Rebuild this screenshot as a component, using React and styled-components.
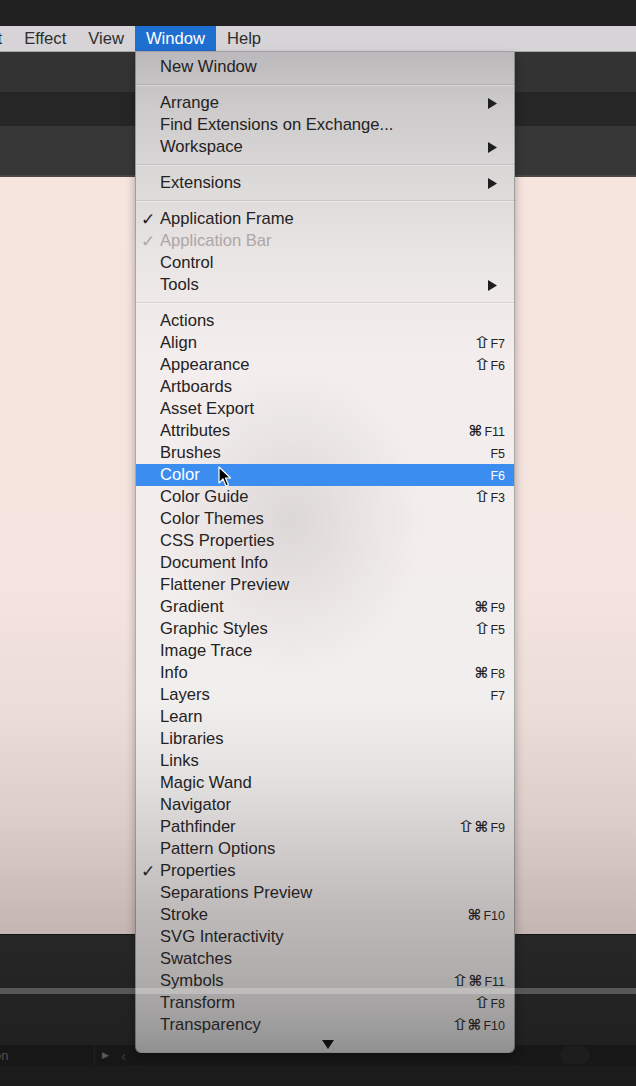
import React from 'react'
import styled, { createGlobalStyle } from 'styled-components'

const GlobalStyle = createGlobalStyle`
    html, body {
        margin: 0;
        padding: 0;
        background: #1a1a1a;
    }
    * { box-sizing: border-box; }
`;

const menuBarItems = ['Select', 'Effect', 'View', 'Window', 'Help'];

const items = [
    { label: 'New Window' },
    'sep',
    { label: 'Arrange', sub: true },
    { label: 'Find Extensions on Exchange...' },
    { label: 'Workspace', sub: true },
    'sep',
    { label: 'Extensions', sub: true },
    'sep',
    { label: 'Application Frame', check: true },
    { label: 'Application Bar', check: true, disabled: true },
    { label: 'Control' },
    { label: 'Tools', sub: true },
    'sep',
    { label: 'Actions' },
    { label: 'Align', keys: '⇧F7' },
    { label: 'Appearance', keys: '⇧F6' },
    { label: 'Artboards' },
    { label: 'Asset Export' },
    { label: 'Attributes', keys: '⌘F11' },
    { label: 'Brushes', keys: 'F5' },
    { label: 'Color', keys: 'F6', active: true },
    { label: 'Color Guide', keys: '⇧F3' },
    { label: 'Color Themes' },
    { label: 'CSS Properties' },
    { label: 'Document Info' },
    { label: 'Flattener Preview' },
    { label: 'Gradient', keys: '⌘F9' },
    { label: 'Graphic Styles', keys: '⇧F5' },
    { label: 'Image Trace' },
    { label: 'Info', keys: '⌘F8' },
    { label: 'Layers', keys: 'F7' },
    { label: 'Learn' },
    { label: 'Libraries' },
    { label: 'Links' },
    { label: 'Magic Wand' },
    { label: 'Navigator' },
    { label: 'Pathfinder', keys: '⇧⌘F9' },
    { label: 'Pattern Options' },
    { label: 'Properties', check: true },
    { label: 'Separations Preview' },
    { label: 'Stroke', keys: '⌘F10' },
    { label: 'SVG Interactivity' },
    { label: 'Swatches' },
    { label: 'Symbols', keys: '⇧⌘F11' },
    { label: 'Transform', keys: '⇧F8' },
    { label: 'Transparency', keys: '⇧⌘F10' },
];

function Shortcut({ keys }) {
    const symbols = keys.match(/[⇧⌘]/g) || [];
    const fkey = keys.replace(/[⇧⌘]/g, '');
    return (
        <Keys>
            {symbols.map((s, i) =>
                s === '⇧' ? <Shift key={i}>{s}</Shift> : <Cmd key={i}>{s}</Cmd>
            )}
            <FKey>{fkey}</FKey>
        </Keys>
    );
}

function MenuRow({ item }) {
    return (
        <Row $active={item.active} $disabled={item.disabled}>
            {item.check && <Check>✓</Check>}
            <Label>{item.label}</Label>
            {item.keys && <Shortcut keys={item.keys} />}
            {item.sub && (
                <SubArrow width="9" height="11" viewBox="0 0 9 11">
                    <polygon points="0,0 9,5.5 0,11" fill="#1e1e1e" />
                </SubArrow>
            )}
        </Row>
    );
}

function App() {
    return (
        <Page>
            <GlobalStyle />
            <TopBar />
            <MenuBar>
                {menuBarItems.map((m, i) => (
                    <BarItem key={m} $first={i === 0} $open={m === 'Window'}>{m}</BarItem>
                ))}
            </MenuBar>
            <ControlPanel />
            <TabStrip />
            <OptionsBar />
            <Canvas />
            <BottomArea>
                <StatusBar>
                    <StatusText>on</StatusText>
                    <StatusDivider />
                    <StatusPlay>▶</StatusPlay>
                    <StatusPrev>‹</StatusPrev>
                    <StatusPill />
                </StatusBar>
                <Footer />
            </BottomArea>

            <Dropdown>
                {items.map((item, i) =>
                    item === 'sep' ? <Separator key={i} /> : <MenuRow key={i} item={item} />
                )}
                <ScrollRow>
                    <svg width="12" height="9" viewBox="0 0 12 9">
                        <polygon points="0,0 12,0 6,9" fill="#111" />
                    </svg>
                </ScrollRow>
            </Dropdown>

            <ProgressStripe />

            <Cursor width="14" height="22" viewBox="0 0 14 22">
                <path d="M1 1 L1 17 L5 13 L8 20 L10.5 19 L7.5 12 L12.5 12 Z" fill="#000" stroke="#fff" strokeWidth="1.2" strokeLinejoin="round" />
            </Cursor>
        </Page>
    );
}

const Page = styled.div`
    position: relative;
    width: 636px;
    height: 1086px;
    overflow: hidden;
    display: flex;
    flex-direction: column;
    background: #1a1a1a;
    font-family: "Liberation Sans", Arial, sans-serif;
`;

const TopBar = styled.div`
    height: 26px;
    background: #212121;
    flex-shrink: 0;
`;

const MenuBar = styled.div`
    height: 26px;
    flex-shrink: 0;
    display: flex;
    align-items: stretch;
    background: #d6d4d6;
    border-bottom: 1px solid #a9a7a9;
`;

const BarItem = styled.div`
    display: flex;
    align-items: center;
    padding: 0 11px;
    margin-left: ${p => (p.$first ? '-55px' : '0')};
    font-size: 16.6px;
    color: ${p => (p.$open ? '#fff' : '#2e2e2e')};
    background: ${p => (p.$open ? '#1f6fd1' : 'transparent')};
`;

const ControlPanel = styled.div`
    height: 40px;
    flex-shrink: 0;
    background: #333333;
`;

const TabStrip = styled.div`
    height: 34px;
    flex-shrink: 0;
    background: #262626;
`;

const OptionsBar = styled.div`
    height: 51px;
    flex-shrink: 0;
    background: #373737;
    border-bottom: 2px solid #4b4645;
`;

const Canvas = styled.div`
    height: 758px;
    flex-shrink: 0;
    background: linear-gradient(to bottom, #f6e4de 0%, #f4e3de 55%, #ecddd8 70%, #dccdc9 85%, #c5b5b2 100%);
    border-bottom: 1px solid #161616;
`;

const BottomArea = styled.div`
    flex: 1;
    display: flex;
    flex-direction: column;
    justify-content: flex-end;
    background: linear-gradient(to bottom, #272727, #1e1e1e);
`;

const StatusBar = styled.div`
    height: 20px;
    display: flex;
    align-items: center;
    background: #171717;
    color: #4e4e4e;
    font-size: 13px;
`;

const StatusText = styled.span`
    width: 100px;
    margin-left: -6px;
`;

const StatusDivider = styled.span`
    width: 1px;
    height: 20px;
    background: #202020;
`;

const StatusPlay = styled.span`
    font-family: "DejaVu Sans", sans-serif;
    font-size: 9px;
    margin-left: 7px;
    color: #5a5a5a;
`;

const StatusPrev = styled.span`
    margin-left: 12px;
    font-size: 15px;
    color: #3c3c3c;
`;

const StatusPill = styled.span`
    width: 30px;
    height: 18px;
    border-radius: 9px;
    background: #1d1d1d;
    margin-left: auto;
    margin-right: 46px;
`;

const Footer = styled.div`
    height: 21px;
    background: #1b1b1b;
`;

const Dropdown = styled.div`
    position: absolute;
    top: 52px;
    left: 135px;
    width: 380px;
    height: 1001px;
    padding-top: 4px;
    display: flex;
    flex-direction: column;
    border-radius: 0 0 6px 6px;
    border: 1px solid rgba(0, 0, 0, 0.28);
    border-top: none;
    box-shadow: 0 4px 10px rgba(0, 0, 0, 0.3);
    background:
        radial-gradient(ellipse 130px 150px at 155px 470px, rgba(60, 55, 55, 0.12), rgba(60, 55, 55, 0) 100%),
        linear-gradient(to bottom,
            #bbb9bb 0px,
            #cbc9c9 50px,
            #dcd9d9 130px,
            #ebe6e6 210px,
            #f3eded 300px,
            #f3eeee 560px,
            #f1eeee 650px,
            #e5e2e2 720px,
            #d2cece 790px,
            #bebaba 860px,
            #aeabab 930px,
            #9c9b9b 980px,
            #8f8f8f 1001px);
`;

const Row = styled.div`
    position: relative;
    height: 22px;
    flex-shrink: 0;
    display: flex;
    align-items: center;
    padding: 0 9px 0 24px;
    font-size: 16.6px;
    line-height: 22px;
    color: ${p => (p.$active ? '#fff' : p.$disabled ? '#aca7a7' : '#242222')};
    background: ${p => (p.$active ? '#3b8df0' : 'transparent')};
`;

const Label = styled.span`
    flex: 1;
    white-space: nowrap;
`;

const Check = styled.span`
    position: absolute;
    left: 5px;
    top: 0;
    font-family: "DejaVu Sans", sans-serif;
    font-size: 17px;
    font-weight: bold;
`;

const Keys = styled.span`
    display: flex;
    align-items: center;
`;

const Shift = styled.span`
    display: inline-block;
    width: 13px;
    margin-right: 2px;
    text-align: center;
    font-family: "DejaVu Sans", sans-serif;
    font-size: 16px;
    line-height: 22px;
    transform: scaleX(1.5);
`;

const Cmd = styled.span`
    font-family: "DejaVu Sans", sans-serif;
    font-size: 15px;
    font-weight: bold;
    line-height: 22px;
    margin-right: 2px;
`;

const FKey = styled.span`
    font-size: 12.5px;
    line-height: 22px;
    margin-top: 1px;
`;

const SubArrow = styled.svg`
    margin-right: 8px;
`;

const Separator = styled.div`
    height: 14px;
    flex-shrink: 0;
    display: flex;
    align-items: center;
    &::after {
        content: '';
        flex: 1;
        height: 2px;
        background: linear-gradient(to bottom, rgba(0, 0, 0, 0.1) 50%, rgba(255, 255, 255, 0.35) 50%);
    }
`;

const ScrollRow = styled.div`
    height: 18px;
    display: flex;
    align-items: center;
    justify-content: center;
    padding-left: 6px;
`;

const ProgressStripe = styled.div`
    position: absolute;
    top: 988px;
    left: 0;
    right: 0;
    height: 6px;
    background: rgba(255, 255, 255, 0.24);
`;

const Cursor = styled.svg`
    position: absolute;
    left: 218px;
    top: 466px;
`;

export default App
